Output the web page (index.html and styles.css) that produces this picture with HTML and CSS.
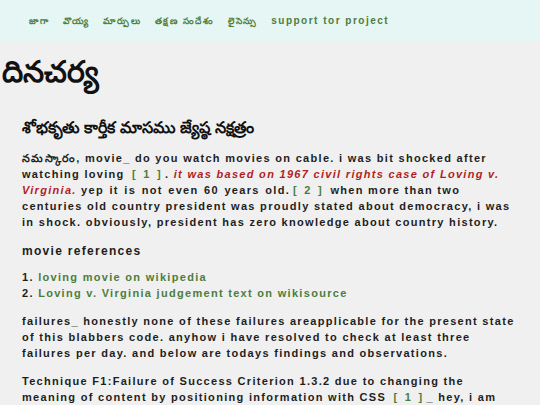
FILE: index.html
```html
<!DOCTYPE html>
<html lang="te">
<head>
<meta charset="utf-8">
<title>దినచర్య</title>
<link rel="stylesheet" href="styles.css">
</head>
<body>
<header class="topbar">
  <nav class="nav">
    <a href="#">జాగా</a>
    <a href="#">వొయ్య</a>
    <a href="#">మార్పులు</a>
    <a href="#">తక్షణ సందేశం</a>
    <a href="#">లైసెన్సు</a>
    <a class="en" href="#" lang="en">support tor project</a>
  </nav>
</header>
<main class="page">
  <h1 class="title">దినచర్య</h1>
  <section class="content">
    <h2 class="date">శోభకృతు కార్తీక మాసము జ్యేష్ఠ నక్షత్రం</h2>
    <p>నమస్కారం, movie_ do you watch movies on cable. i was bit shocked after watching loving <a class="ref" href="#">[ 1 ]</a>. <em class="quote">it was based on 1967 civil rights case of Loving v. Virginia.</em> <span class="remark">yep it is not even 60 years old.</span><a class="ref" href="#">[ 2 ]</a> when more than two centuries old country president was proudly stated about democracy, i was in shock. obviously, president has zero knowledge about country history.</p>
    <h3 class="sub">movie references</h3>
    <ol class="refs">
      <li><a href="#">loving movie on wikipedia</a></li>
      <li><a href="#">Loving v. Virginia judgement text on wikisource</a></li>
    </ol>
    <p>failures_ honestly none of these failures areapplicable for the present state of this blabbers code. anyhow i have resolved to check at least three failures per day. and below are todays findings and observations.</p>
    <p>Technique F1:Failure of Success Criterion 1.3.2 due to changing the meaning of content by positioning information with CSS <a class="ref" href="#">[ 1 ]</a>_ hey, i am trying to learn more about this technique and its failures today.</p>
  </section>
</main>
</body>
</html>
```

FILE: styles.css
```css
html, body {
  margin: 0;
  padding: 0;
}
body {
  background: #f0f0f0;
  color: #1e1e1e;
  font-family: "Liberation Sans", Arial, "Noto Sans", sans-serif;
  font-weight: bold;
  font-size: 11px;
  letter-spacing: 1.3px;
  line-height: 16px;
}
a {
  color: #4d7d3c;
  text-decoration: none;
}
.topbar {
  background: #e5f6f4;
  height: 41px;
  display: flex;
  align-items: center;
  padding-left: 29px;
}
.nav {
  display: flex;
  align-items: baseline;
  gap: 13.5px;
  font-size: 9px;
  letter-spacing: 1.6px;
}
.nav .en {
  font-size: 10px;
  letter-spacing: 1.5px;
}
.title {
  margin: 11px 0 0 0;
  padding-left: 2px;
  font-size: 30px;
  line-height: 40px;
  letter-spacing: 0;
  font-weight: bold;
  color: #111;
}
.content {
  padding: 0 22px;
}
.date {
  font-size: 16px;
  font-weight: bold;
  letter-spacing: 0;
  line-height: 20px;
  margin: 26px 0 0 0;
  color: #111;
}
p {
  margin: 12px 0;
}
.ref {
  padding: 0 3px;
  word-spacing: 2px;
}
.remark {
  word-spacing: 1.2px;
}
.quote {
  color: #b01e24;
}
.sub {
  font-size: 12px;
  margin: 13px 0 10px 0;
  line-height: 16px;
}
.refs {
  margin: 0;
  padding: 0;
  list-style: none;
  counter-reset: r;
}
.refs li {
  counter-increment: r;
}
.refs li::before {
  content: counter(r) ". ";
  color: #1e1e1e;
}
```
